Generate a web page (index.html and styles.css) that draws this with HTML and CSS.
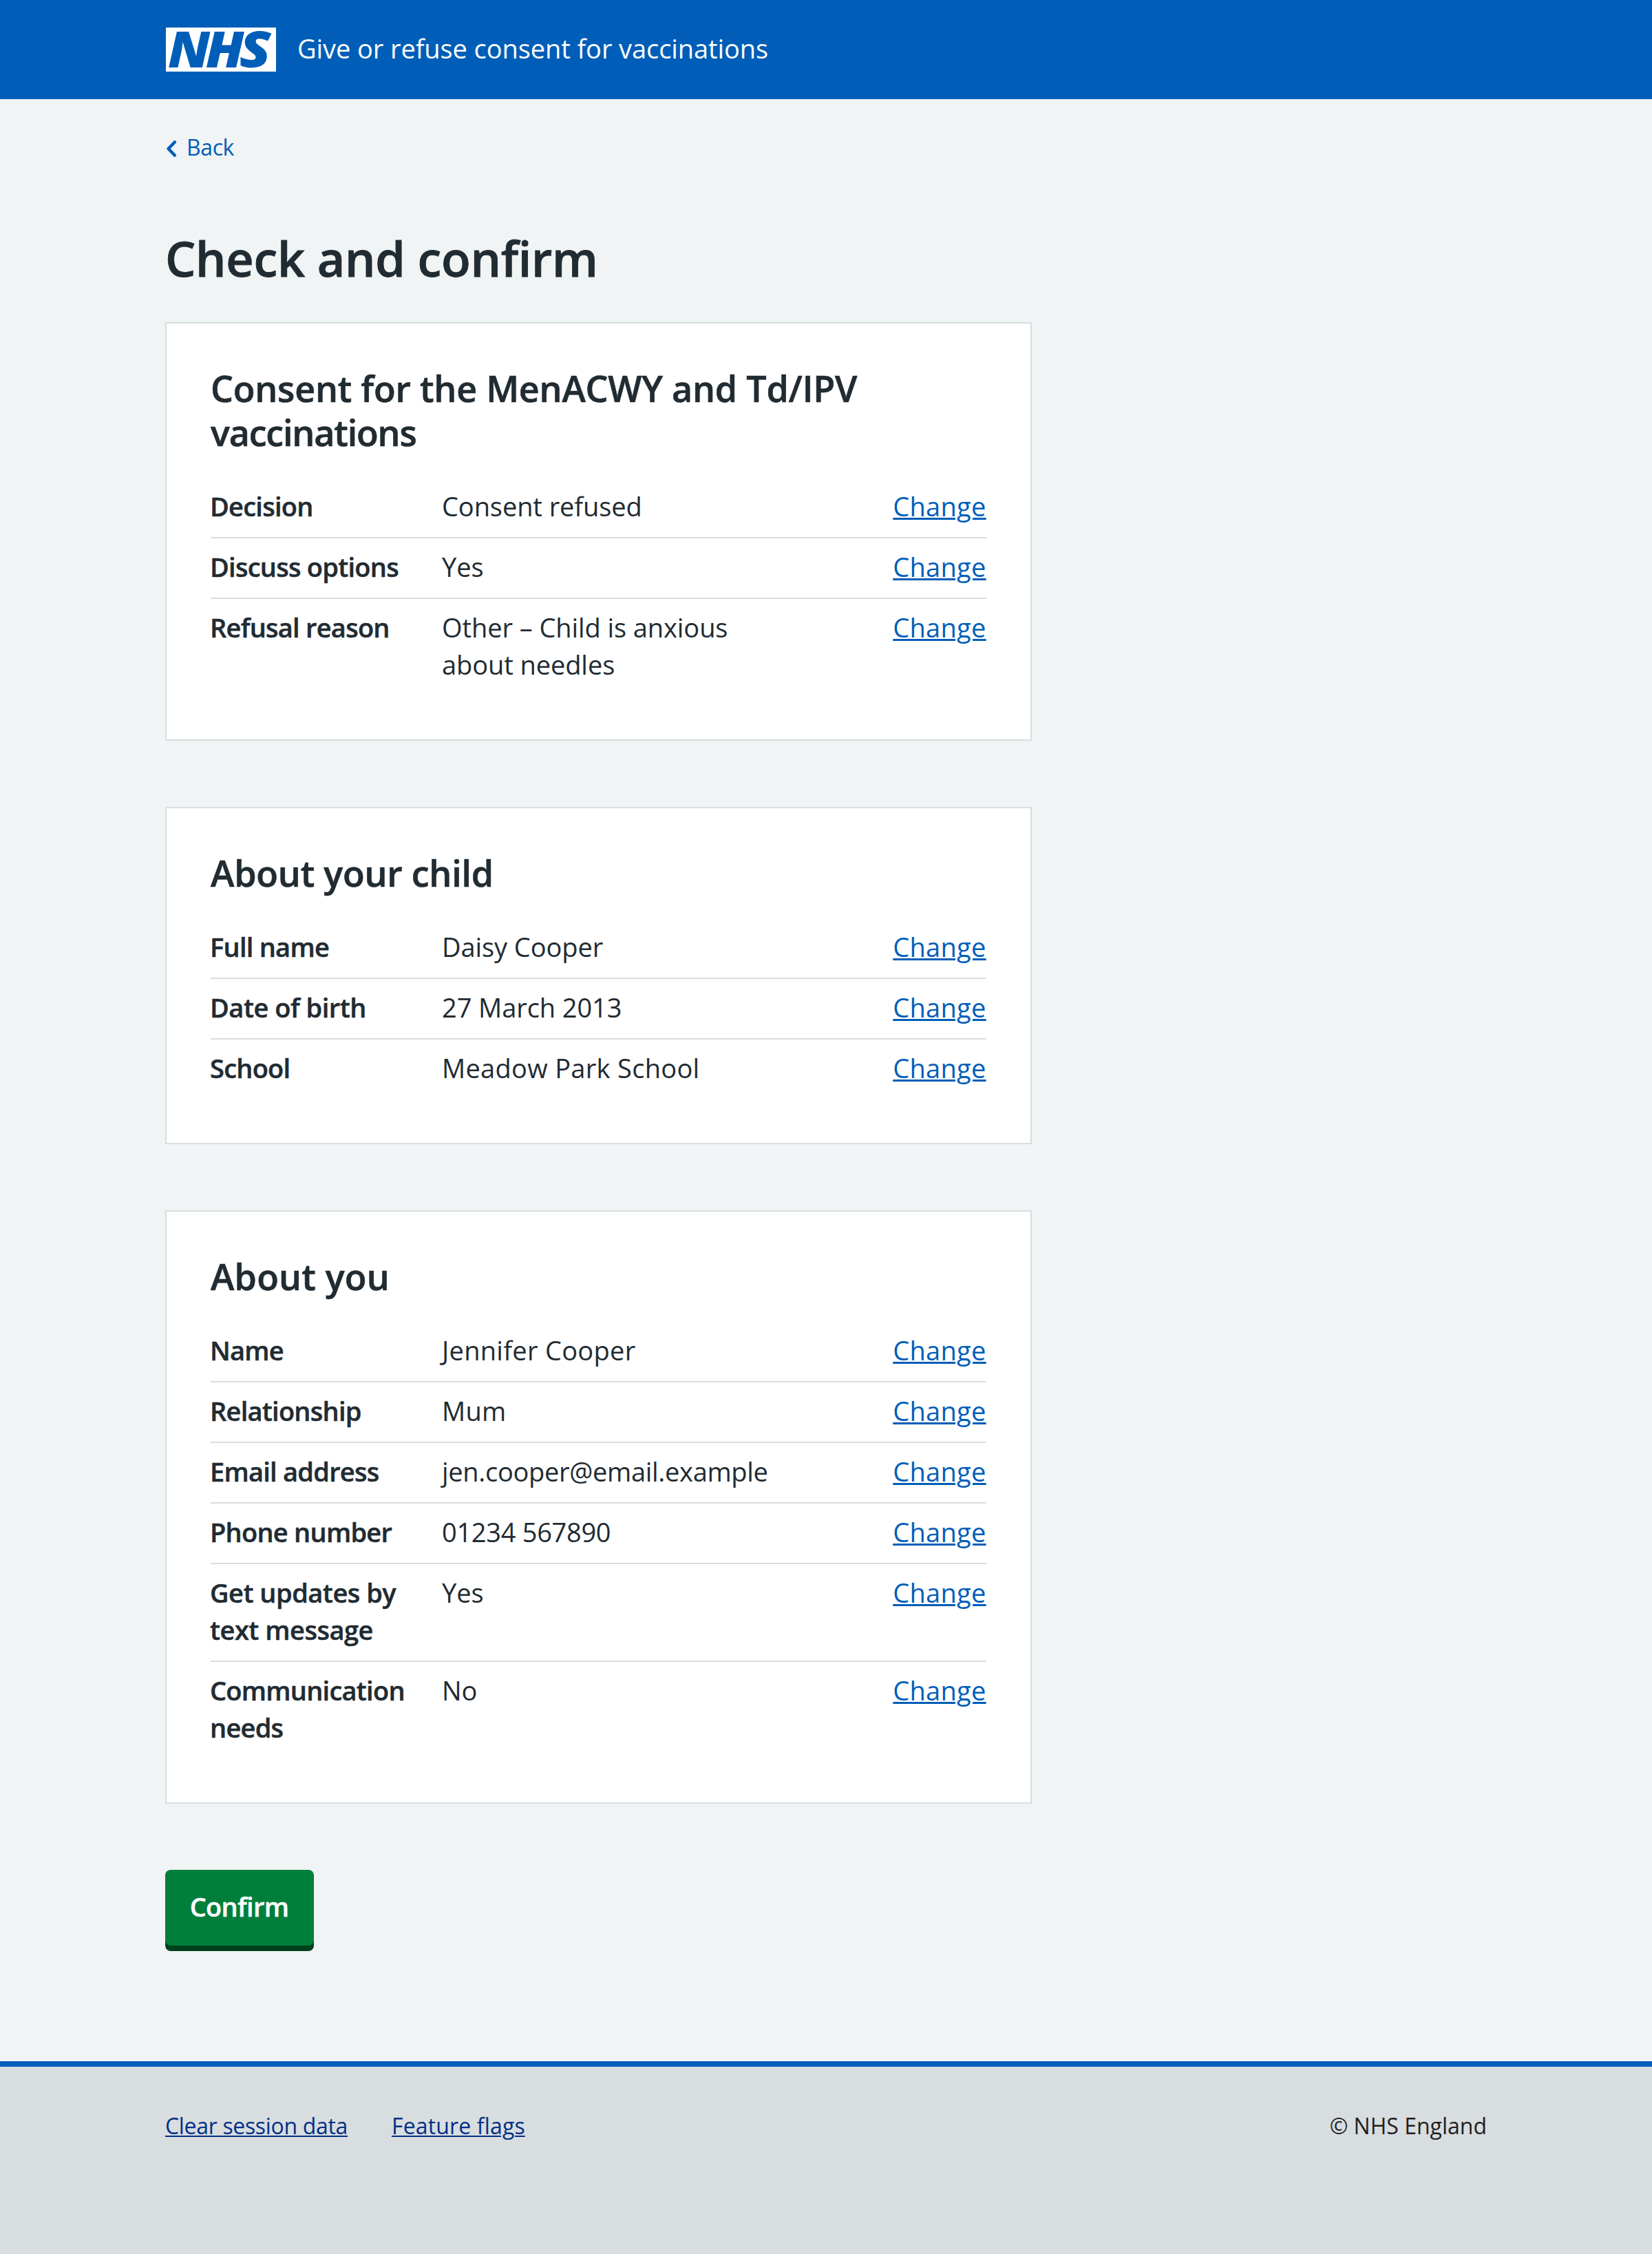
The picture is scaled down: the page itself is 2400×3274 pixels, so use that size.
FILE: index.html
```html
<!DOCTYPE html>
<html lang="en">
<head>
<meta charset="utf-8">
<title>Check and confirm</title>
<link rel="stylesheet" href="styles.css">
</head>
<body>
<header class="header">
  <div class="container header-inner">
    <svg class="logo" viewBox="0 0 160 64" role="img" aria-label="NHS">
      <rect width="160" height="64" fill="#fff"/>
      <g class="logo-text">
        <text transform="translate(3 58) scale(1.06 1)">N</text>
        <text transform="translate(57.7 58) scale(1.07 1)">H</text>
        <text transform="translate(106.8 58) scale(1.148 1)">S</text>
      </g>
    </svg>
    <span class="service-name">Give or refuse consent for vaccinations</span>
  </div>
</header>

<div class="container">
  <a class="back-link" href="#">
    <svg class="back-icon" viewBox="0 0 16 24"><path d="M12.7 2.5 3.6 12l9.1 9.5" fill="none" stroke="currentColor" stroke-width="4.6" stroke-linecap="round" stroke-linejoin="round"/></svg>
    <span>Back</span>
  </a>

  <main class="main">
    <h1 class="page-title">Check and confirm</h1>

    <section class="card">
      <h2 class="card-title">Consent for the MenACWY and Td/IPV <span class="tight">vaccinations</span></h2>
      <dl class="summary">
        <div class="row"><dt>Decision</dt><dd>Consent refused</dd><dd class="action"><a href="#">Change</a></dd></div>
        <div class="row"><dt>Discuss options</dt><dd>Yes</dd><dd class="action"><a href="#">Change</a></dd></div>
        <div class="row"><dt>Refusal reason</dt><dd>Other – Child is anxious about needles</dd><dd class="action"><a href="#">Change</a></dd></div>
      </dl>
    </section>

    <section class="card">
      <h2 class="card-title">About your child</h2>
      <dl class="summary">
        <div class="row"><dt>Full name</dt><dd>Daisy Cooper</dd><dd class="action"><a href="#">Change</a></dd></div>
        <div class="row"><dt class="loose">Date of birth</dt><dd>27 March 2013</dd><dd class="action"><a href="#">Change</a></dd></div>
        <div class="row"><dt>School</dt><dd class="loose">Meadow Park School</dd><dd class="action"><a href="#">Change</a></dd></div>
      </dl>
    </section>

    <section class="card">
      <h2 class="card-title loose">About you</h2>
      <dl class="summary">
        <div class="row"><dt>Name</dt><dd class="loose">Jennifer Cooper</dd><dd class="action"><a href="#">Change</a></dd></div>
        <div class="row"><dt>Relationship</dt><dd class="loose">Mum</dd><dd class="action"><a href="#">Change</a></dd></div>
        <div class="row"><dt>Email address</dt><dd class="snug">jen.cooper@email.example</dd><dd class="action"><a href="#">Change</a></dd></div>
        <div class="row"><dt>Phone number</dt><dd class="snug">01234 567890</dd><dd class="action"><a href="#">Change</a></dd></div>
        <div class="row"><dt class="loose">Get updates by text message</dt><dd>Yes</dd><dd class="action"><a href="#">Change</a></dd></div>
        <div class="row"><dt>Communication needs</dt><dd>No</dd><dd class="action"><a href="#">Change</a></dd></div>
      </dl>
    </section>

    <button class="button" type="button">Confirm</button>
  </main>
</div>

<footer class="footer">
  <div class="container footer-inner">
    <nav class="footer-links">
      <a class="snug" href="#">Clear session data</a>
      <a class="loose" href="#">Feature flags</a>
    </nav>
    <span class="copyright">© NHS England</span>
  </div>
</footer>
</body>
</html>
```
FILE: styles.css
```css
* { box-sizing: border-box; }

body {
  margin: 0;
  min-height: 3274px;
  display: flex;
  flex-direction: column;
  background: #f0f4f5;
  color: #212b32;
  font: 400 38px/54px "Open Sans", "Noto Sans", sans-serif;
}

.container { width: 1920px; margin: 0 auto; }

.header { background: #005eb8; color: #fff; }
.header-inner { display: flex; align-items: center; height: 144px; gap: 31px; }
.logo { display: block; width: 160px; height: 64px; margin-left: 1px; }
.logo-text {
  fill: #005eb8;
  font: italic 800 73px "Open Sans", sans-serif;
}
.service-name { padding-bottom: 5px; letter-spacing: -0.09px; }

.back-link {
  display: flex;
  align-items: center;
  gap: 14px;
  margin-top: 46px;
  width: max-content;
  color: #005eb8;
  font-size: 32px;
  line-height: 48px;
  letter-spacing: -0.4px;
  text-decoration: none;
}
.back-icon { width: 16px; height: 24px; margin: 4px 0 0 1px; }

.page-title,
.card-title,
.row dt,
.button { font-weight: 600; -webkit-text-stroke: 0.012em currentColor; }

.page-title {
  margin: 91px 0 47px;
  font-size: 70px;
  line-height: 92px;
  letter-spacing: -0.25px;
}

.card {
  width: 1258.67px;
  margin-bottom: 96px;
  padding: 62px 64px 64px;
  background: #fff;
  border: 2px solid #d8dde0;
}
.card-title {
  margin: 0 0 34px;
  font-size: 52px;
  line-height: 64px;
  letter-spacing: -0.22px;
}
.card-title.loose { letter-spacing: 0.2px; }
.card-title .tight { letter-spacing: -1.15px; }

.summary { margin: 0; }
.row {
  display: grid;
  grid-template-columns: 336px 1fr 20%;
  padding: 14px 0 18px;
  border-bottom: 2px solid #d8dde0;
}
.row:last-child { border-bottom: 0; }
.row dt { margin-left: -1px; padding-right: 32px; letter-spacing: -0.75px; }
.row dt.loose { letter-spacing: -0.5px; }
.row dd { margin: 0; padding-right: 96px; letter-spacing: -0.08px; }
.row dd.loose { letter-spacing: 0.3px; }
.row dd.snug { padding-right: 32px; letter-spacing: -0.3px; }
.row dd.action { padding-right: 0; text-align: right; letter-spacing: 0.3px; }
.action a {
  color: #005eb8;
  text-decoration-thickness: 3px;
  text-underline-offset: 2px;
}

.button {
  display: block;
  width: 216px;
  height: 110px;
  padding: 0 1px 4px 0;
  border: 0;
  border-radius: 8px;
  background: #007f3b;
  box-shadow: 0 8px 0 #00401e;
  color: #fff;
  font-family: inherit;
  font-size: inherit;
  line-height: inherit;
  letter-spacing: -0.7px;
}

.footer {
  flex: 1;
  margin-top: 168px;
  border-top: 8px solid #005eb8;
  background: #d8dde0;
  font-size: 32px;
  line-height: 48px;
}
.footer-inner { display: flex; justify-content: space-between; padding-top: 62px; }
.footer-links { display: flex; gap: 64px; }
.footer-links a {
  color: #003087;
  text-decoration-thickness: 2px;
  text-underline-offset: 2px;
}
.footer-links .snug { letter-spacing: -0.33px; }
.footer-links .loose { letter-spacing: 0.15px; }
.copyright { color: #231f20; }
```
